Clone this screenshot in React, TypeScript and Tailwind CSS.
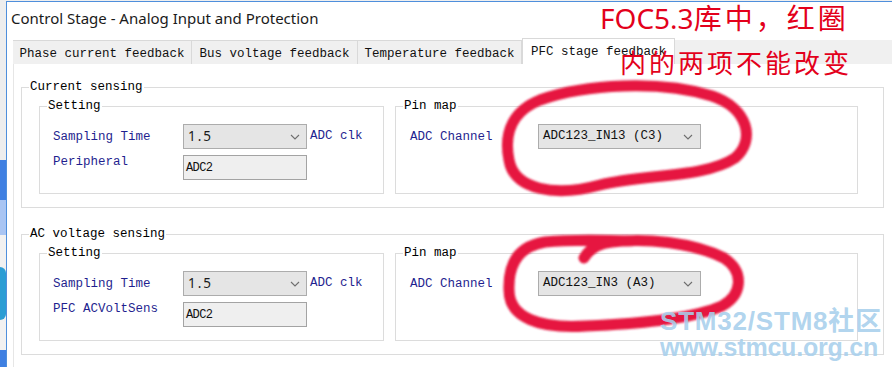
import React from 'react';

const Chevron = () => (
    <svg width="10" height="6" viewBox="0 0 10 6" className="shrink-0">
        <polyline points="1,1 5,5 9,1" fill="none" stroke="#6e6e6e" strokeWidth="1.1" />
    </svg>
);

interface IGroupProps {
    title: string;
    className: string;
    children: React.ReactNode;
}

const Group = ({ title, className, children }: IGroupProps) => {
    return (
        <fieldset className={className}>
            <legend className="ml-[7px] px-[1px] text-[12.5px] leading-[15px] text-black">{title}</legend>
            {children}
        </fieldset>
    );
};

interface ISectionProps {
    title: string;
    secondLabel: string;
    channel: string;
}

const Section = ({ title, secondLabel, channel }: ISectionProps) => {
    return (
        <Group title={title} className="w-[863px] border border-[#dcdcdc]">
            <div className="flex gap-[11px] pt-[4px] pb-[13px] pl-[17px]">
                <Group title="Setting" className="w-[345px] border border-[#dcdcdc]">
                    <div className="flex flex-col gap-[6px] pt-[10px] pb-[13px] pl-[13px]">
                        <div className="flex h-[25px] items-center">
                            <div className="w-[130px] text-[12.5px] leading-[14px] text-[#1f1f8f]">Sampling Time</div>
                            <div className="flex h-[25px] w-[124px] items-center justify-between border border-[#acacac] bg-[#e5e5e5] pl-[4px] pr-[6px]">
                                <span className="font-['Noto_Sans',sans-serif] text-[13.5px] tracking-[2px] text-[#1a1a1a]">1.5</span>
                                <Chevron />
                            </div>
                            <div className="ml-[3px] text-[12.5px] text-[#1f1f8f]">ADC clk</div>
                        </div>
                        <div className="flex h-[25px] items-start">
                            <div className="w-[130px] pt-[1px] text-[12.5px] leading-[13px] text-[#1f1f8f]">{secondLabel}</div>
                            <div className="flex h-[25px] w-[124px] items-center border border-[#a3a3a3] bg-[#efefef] pl-[2px] text-[12px] tracking-[-0.6px] text-[#111]">
                                ADC2
                            </div>
                        </div>
                    </div>
                </Group>
                <Group title="Pin map" className="w-[463px] border border-[#dcdcdc]">
                    <div className="flex items-center pt-[10px] pl-[14px]">
                        <div className="w-[128px] text-[12.5px] leading-[14px] text-[#1f1f8f]">ADC Channel</div>
                        <div className="flex h-[25px] w-[163px] items-center justify-between border border-[#acacac] bg-[#e5e5e5] pl-[4px] pr-[7px] text-[12.5px] text-[#111]">
                            <span>{channel}</span>
                            <Chevron />
                        </div>
                    </div>
                </Group>
            </div>
        </Group>
    );
};

const tabs = [
    { label: 'Phase current feedback', w: 'w-[179px]' },
    { label: 'Bus voltage feedback', w: 'w-[166px]' },
    { label: 'Temperature feedback', w: 'w-[164px]' },
];

const App = () => {
    return (
        <div className="relative flex h-[367px] w-[892px] overflow-hidden bg-[#efefef] font-['Liberation_Mono',monospace]">
            {/* desktop behind the window */}
            <div className="flex w-[6px] flex-col">
                <div className="h-[160px] bg-[#eeeeee]" />
                <div className="h-[40px] bg-[#3f80e2]" />
                <div className="h-[35px] bg-[#a9c5f3]" />
                <div className="h-[32px] bg-[#f1f1f1]" />
                <div className="h-[53px] rounded-r-full bg-[#2b9dd4]" />
                <div className="h-[30px] bg-[#f1f1f1]" />
                <div className="flex-1 bg-[#3f80e2]" />
            </div>

            <div className="mt-[1px] flex flex-1 flex-col border-t border-l border-[#4f8fdc] bg-white">
                <div className="h-[38px] pt-[5px] pl-[4px] font-['Noto_Sans',sans-serif] text-[15px] leading-[22px] text-[#1a1a1a]">
                    Control Stage - Analog Input and Protection
                </div>

                <div className="flex flex-1 flex-col pl-[6px]">
                    <div className="flex h-[24px] items-end bg-[#f0f0f0]">
                        {tabs.map((t) => (
                            <div
                                key={t.label}
                                className={`${t.w} flex h-[24px] items-center justify-center border-t border-r border-[#d9d9d9] pt-[3px] text-[12.5px] text-[#111]`}
                            >
                                {t.label}
                            </div>
                        ))}
                        <div className="flex h-[26px] w-[153px] items-center justify-center border-x border-t border-[#d9d9d9] bg-white pt-[1px] text-[12.5px] text-[#111]">
                            PFC stage feedback
                        </div>
                    </div>

                    <div className="flex flex-1 flex-col gap-[19px] border-l border-[#e6e6e6] pt-[16px] pl-[7px]">
                        <Section title="Current sensing" secondLabel="Peripheral" channel="ADC123_IN13 (C3)" />
                        <Section title="AC voltage sensing" secondLabel="PFC ACVoltSens" channel="ADC123_IN3 (A3)" />
                    </div>
                </div>
            </div>

            {/* red hand-drawn annotation */}
            <svg className="pointer-events-none absolute inset-0" width="892" height="367">
                <defs>
                    <filter id="soft">
                        <feGaussianBlur stdDeviation="0.9" />
                    </filter>
                </defs>
                <g fill="none" stroke="#e6173f" strokeWidth="11" strokeLinecap="round" strokeLinejoin="round" filter="url(#soft)">
                    <path d="M 540 100 C 585 84, 660 80, 712 96 C 748 108, 756 140, 735 158 C 705 178, 645 174, 600 185 C 555 197, 514 190, 509 160 C 503 130, 515 110, 540 100 Z" />
                    <path d="M 584 258 C 590 248, 600 243, 612 242 C 645 238, 692 242, 724 258 C 745 272, 742 295, 722 306 C 690 320, 632 324, 586 326 C 540 329, 509 318, 509 290 C 508 262, 520 246, 545 242 C 572 239, 603 240, 632 241" />
                </g>
            </svg>

            <div className="absolute top-0 left-[600px] flex items-baseline font-['Noto_Sans_CJK_SC',sans-serif] text-[28px] leading-[34px] text-[#e3001b]">
                <span className="font-['Noto_Sans',sans-serif]">FOC5.3</span>
                <span className="tracking-[3px]">库中，红圈</span>
            </div>
            <div className="absolute top-[45px] left-[620px] font-['Noto_Sans_CJK_SC',sans-serif] text-[26px] leading-[34px] tracking-[3px] text-[#e3001b]">
                内的两项不能改变
            </div>

            {/* watermark */}
            <div className="absolute top-[308px] left-[660px] flex flex-col font-['Liberation_Sans','Noto_Sans_CJK_SC',sans-serif] leading-[26px] font-bold text-[#a8cfec]/90">
                <span className="text-[26px] tracking-[0.8px]">STM32/STM8社区</span>
                <span className="text-[25px] tracking-[-0.2px]">www.stmcu.org.cn</span>
            </div>
        </div>
    );
};

export default App;
